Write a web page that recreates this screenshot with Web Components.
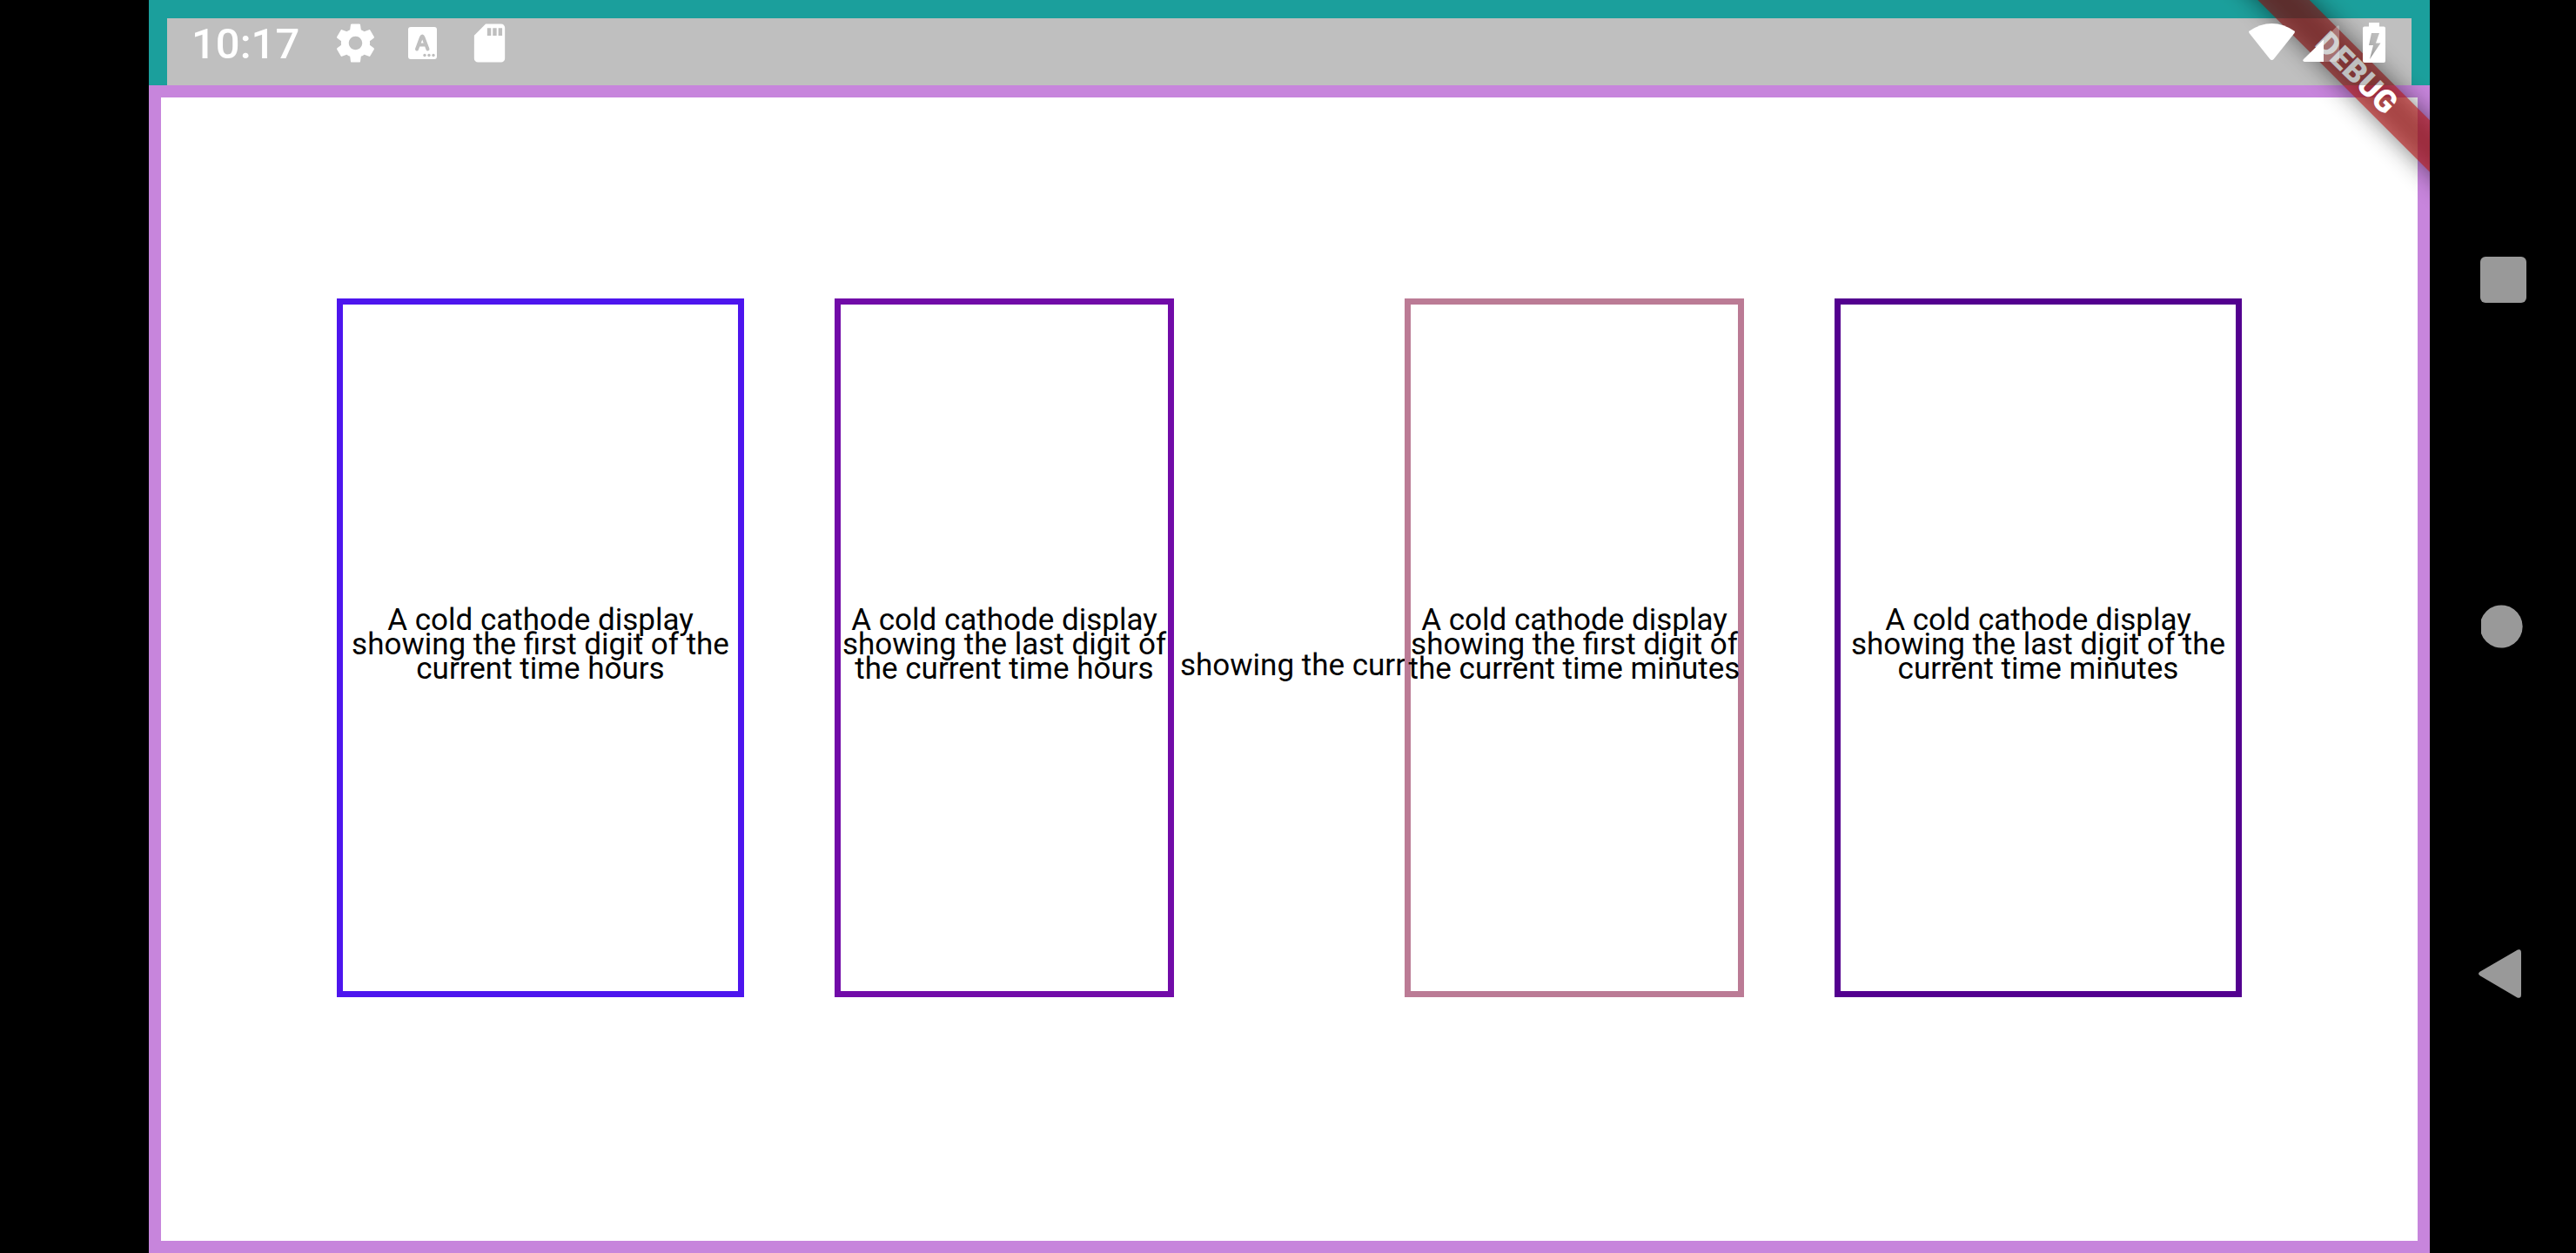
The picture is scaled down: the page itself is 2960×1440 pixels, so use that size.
<!DOCTYPE html>
<html lang="en">
<head>
<meta charset="utf-8">
<title>Nixie clock</title>
<style>
  html, body { margin: 0; height: 100%; background: #000; }
  body { font-family: Roboto, "Liberation Sans", sans-serif; }
</style>
</head>
<body>
<nixie-phone>
  <clock-face>
    <digit-tube slot="h1" style="--edge:#4d15ee">A cold cathode display<br>showing the first digit of the<br>current time hours</digit-tube>
    <digit-tube slot="h2" style="--edge:#710ba8">A cold cathode display<br>showing the last digit of<br>the current time hours</digit-tube>
    <span slot="colon">showing the curr</span>
    <digit-tube slot="m1" style="--edge:#bb7b95">A cold cathode display<br>showing the first digit of<br>the current time minutes</digit-tube>
    <digit-tube slot="m2" style="--edge:#53008f">A cold cathode display<br>showing the last digit of the<br>current time minutes</digit-tube>
  </clock-face>
</nixie-phone>

<script>
const define = (name, html) => customElements.define(name, class extends HTMLElement {
  constructor() {
    super();
    this.attachShadow({ mode: "open" }).innerHTML = html;
  }
});

define("digit-tube", `
  <style>
    :host { display: flex; align-items: center; justify-content: center; box-sizing: border-box;
      min-width: 0; height: 100%; padding-bottom: 7px; border: 7px solid var(--edge);
      background: #fff; color: #000; font-size: 35px; line-height: 28px; text-align: center; white-space: nowrap; }
  </style>
  <div><slot></slot></div>`);

define("clock-face", `
  <style>
    :host { display: grid; flex: 1; box-sizing: border-box; min-height: 0;
      grid-template-columns: minmax(0,468fr) 104fr minmax(0,390fr) minmax(0,265fr) minmax(0,390fr) 104fr minmax(0,468fr);
      padding: 231px 202px 280px; border: 14px solid #c785dc; background: #fff; }
    .h1 { grid-column: 1; } .h2 { grid-column: 3; }
    .m1 { grid-column: 5; } .m2 { grid-column: 7; }
    .colon { grid-column: 4; display: flex; align-items: center; padding: 41px 0 0 7px; overflow: hidden;
      color: #000; font-size: 35px; line-height: 28px; white-space: nowrap; }
  </style>
  <div class="h1"><slot name="h1"></slot></div>
  <div class="h2"><slot name="h2"></slot></div>
  <div class="colon"><slot name="colon"></slot></div>
  <div class="m1"><slot name="m1"></slot></div>
  <div class="m2"><slot name="m2"></slot></div>`);

define("status-bar", `
  <style>
    :host { display: flex; align-items: center; justify-content: space-between; box-sizing: border-box;
      height: 98px; padding: 0 34px 0 49px; background: rgba(0,0,0,.25); color: #fff; }
    div { display: flex; align-items: center; }
    .left { gap: 24px; }
    time { padding: 4px 14px 0 0; font-size: 49px; line-height: 58px; font-weight: 500; }
    svg { display: block; fill: #fff; }
  </style>
  <div class="left">
    <time>10:17</time>
    <svg width="53" height="53" viewBox="0 0 24 24"><path d="M19.43 12.98c.04-.32.07-.64.07-.98s-.03-.66-.07-.98l2.11-1.65c.19-.15.24-.42.12-.64l-2-3.46c-.12-.22-.39-.3-.61-.22l-2.49 1c-.52-.4-1.08-.73-1.69-.98l-.38-2.65C14.46 2.18 14.25 2 14 2h-4c-.25 0-.46.18-.49.42l-.38 2.65c-.61.25-1.17.59-1.69.98l-2.49-1c-.23-.09-.49 0-.61.22l-2 3.46c-.13.22-.07.49.12.64l2.11 1.65c-.04.32-.07.65-.07.98s.03.66.07.98l-2.11 1.65c-.19.15-.24.42-.12.64l2 3.46c.12.22.39.3.61.22l2.49-1c.52.4 1.08.73 1.69.98l.38 2.65c.03.24.24.42.49.42h4c.25 0 .46-.18.49-.42l.38-2.65c.61-.25 1.17-.59 1.69-.98l2.49 1c.23.09.49 0 .61-.22l2-3.46c.12-.22.07-.49-.12-.64l-2.11-1.65zM12 15.5c-1.93 0-3.5-1.57-3.5-3.5s1.57-3.5 3.5-3.5 3.5 1.57 3.5 3.5-1.57 3.5-3.5 3.5z"/></svg>
    <svg width="53" height="53" viewBox="0 0 53 53">
      <rect x="10" y="8" width="33" height="37" rx="3"/>
      <g fill="none" stroke="#bfbfbf" stroke-width="4" stroke-linecap="round" stroke-linejoin="round"><path d="M20 33.500L25 20Q26.200 17 27.400 20L32.500 33.500M22.500 28.500H30"/></g>
      <g fill="#bfbfbf"><circle cx="29" cy="40.500" r="1.700"/><circle cx="34" cy="40.500" r="1.700"/><circle cx="39" cy="40.500" r="1.700"/></g>
    </svg>
    <svg width="53" height="53" viewBox="0 0 24 24"><path d="M18 2h-8L4.020 8 4 20c0 1.100.9 2 2 2h12c1.100 0 2-.9 2-2V4c0-1.100-.9-2-2-2zm-5.200 6.200h-2V4.200h2v4zm2.900 0h-2V4.200h2v4zm2.900 0h-2V4.200h2v4z"/></svg>
  </div>
  <div>
    <svg width="60" height="60" viewBox="0 0 60 60"><path d="M6 17Q19 8 32.500 8Q46 8 59 17L58.500 19L35 48.500Q32.500 51.500 30 48.500L6.500 19Z"/></svg>
    <svg width="60" height="60" viewBox="0 0 60 60"><path d="M32 26.500V52H10Q7 51 9 49Z"/><path d="M32 26.500L48 10.500Q50 9.500 50 12V52H32Z" opacity=".3"/></svg>
    <svg width="60" height="60" viewBox="0 0 60 60"><path fill-rule="evenodd" d="M24 7H36V11.500H41Q43 11.500 43 13.500V51Q43 53 41 53H19Q17 53 17 51V13.500Q17 11.500 19 11.500H24ZM27 19L24 33H29L25 49L37.500 30.500H32L36 19Z"/></svg>
  </div>`);

/* Corner ribbon: a 42px band turned 45 degrees, over its own soft shadow. */
define("debug-ribbon", `
  <style>
    :host { display: grid; grid-template: 168px / 168px; place-items: center; }
    div { grid-area: 1 / 1; width: 400px; height: 42px; transform: rotate(45deg); }
    .shade { background: rgba(0,0,0,.5); filter: blur(14px); }
    .band { background: rgba(183,28,28,.63); color: #fff; font-size: 36px; font-weight: 900; line-height: 42px; text-align: center; }
  </style>
  <div class="shade"></div>
  <div class="band">DEBUG</div>`);

define("nav-keys", `
  <style>
    :host { display: flex; flex-direction: column; box-sizing: border-box; width: 168px; padding: 122px 0; background: #000; }
    button { flex: 1; display: grid; place-items: center; margin: 0; padding: 0; border: 0; background: none; }
    svg { display: block; fill: #999; }
  </style>
  <button aria-label="Overview"><svg width="60" height="60" viewBox="0 0 60 60"><rect x="4" y="4" width="53" height="53" rx="6"/></svg></button>
  <button aria-label="Home"><svg width="60" height="60" viewBox="0 0 60 60"><path d="M5 22A24.500 24.500 0 1 1 5 38Z"/></svg></button>
  <button aria-label="Back"><svg width="60" height="60" viewBox="0 0 60 60"><path d="M47 2.500Q51 1 51 6V54Q51 59 46.500 57.500L4 32.500Q0 30 4 27.500Z"/></svg></button>`);

define("nixie-phone", `
  <style>
    :host { display: flex; height: 100vh; background: #000; }
    .cutout { width: 171px; flex: none; }
    .screen { position: relative; flex: 1; min-width: 0; display: flex; flex-direction: column; overflow: hidden; background: #fff; }
    .inset { box-sizing: border-box; height: 98px; flex: none; border: 21px solid #25d5d0; border-bottom: 0; }
    debug-ribbon { position: absolute; top: 0; right: 0; }
    status-bar { position: absolute; top: 0; left: 0; right: 0; }
    nav-keys { flex: none; }
  </style>
  <div class="cutout"></div>
  <main class="screen">
    <div class="inset"></div>
    <slot></slot>
    <debug-ribbon></debug-ribbon>
    <status-bar></status-bar>
  </main>
  <nav-keys></nav-keys>`);
</script>
</body>
</html>
